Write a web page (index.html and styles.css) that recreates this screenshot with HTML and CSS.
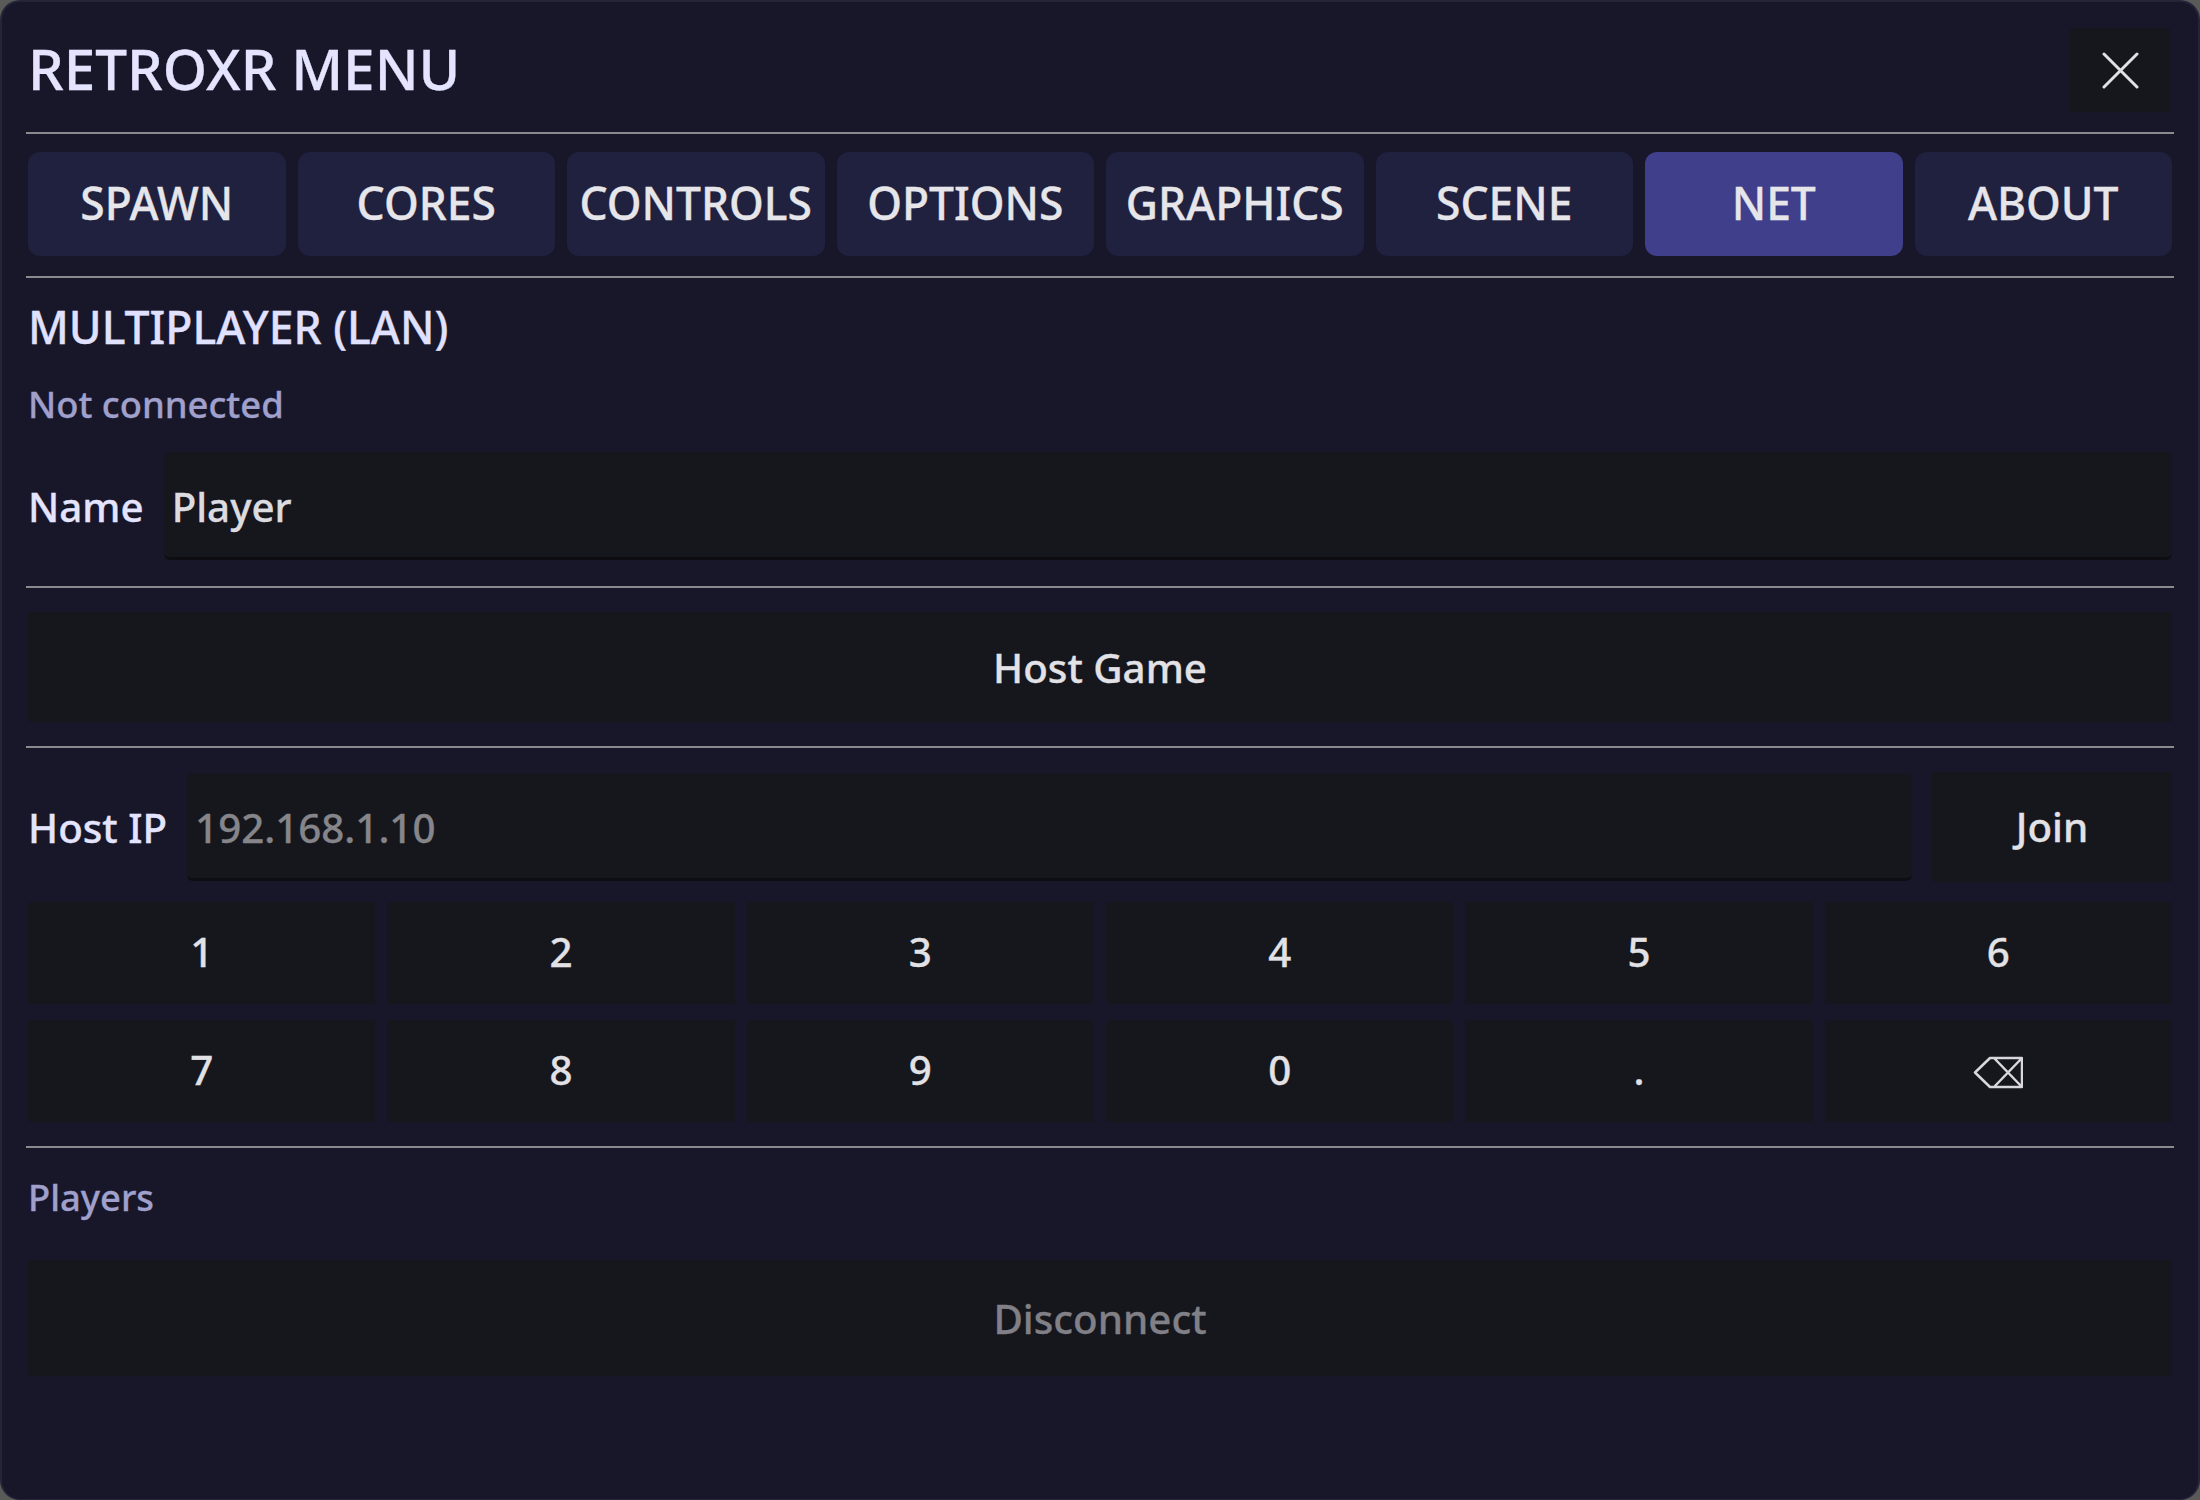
FILE: index.html
```html
<!DOCTYPE html>
<html lang="en">
<head>
    <meta charset="UTF-8">
    <title>RetroXR Menu</title>
    <link rel="stylesheet" href="styles.css">
</head>
<body>
    <div class="menu-panel">
        <div class="title-row">
            <h1>RETROXR MENU</h1>
            <button class="close-btn" aria-label="Close">
                <svg width="37" height="37" viewBox="0 0 37 37">
                    <path d="M2 2L35 35M35 2L2 35" stroke="#e2e2e6" stroke-width="3" stroke-linecap="round" fill="none"/>
                </svg>
            </button>
        </div>
        <hr class="divider">

        <div class="tabs">
            <button class="tab">SPAWN</button>
            <button class="tab">CORES</button>
            <button class="tab">CONTROLS</button>
            <button class="tab">OPTIONS</button>
            <button class="tab">GRAPHICS</button>
            <button class="tab">SCENE</button>
            <button class="tab active">NET</button>
            <button class="tab">ABOUT</button>
        </div>
        <hr class="divider">

        <h2>MULTIPLAYER (LAN)</h2>
        <p class="status">Not connected</p>

        <div class="field-row name-row">
            <label for="name">Name</label>
            <input type="text" id="name" value="Player">
        </div>
        <hr class="divider">

        <button class="action host-btn">Host Game</button>
        <hr class="divider">

        <div class="field-row ip-row">
            <label for="hostIp">Host IP</label>
            <input type="text" id="hostIp" placeholder="192.168.1.10">
            <button class="action join-btn">Join</button>
        </div>

        <div class="keypad">
            <button class="action">1</button>
            <button class="action">2</button>
            <button class="action">3</button>
            <button class="action">4</button>
            <button class="action">5</button>
            <button class="action">6</button>
            <button class="action">7</button>
            <button class="action">8</button>
            <button class="action">9</button>
            <button class="action">0</button>
            <button class="action">.</button>
            <button class="action" aria-label="Backspace">
                <svg class="backspace" width="50" height="33" viewBox="0 0 50 33">
                    <path d="M49 2H17L2 16.500L17 31H49ZM21 2L49 31M49 2L21 31" stroke="#d8d8dc" stroke-width="2.500" stroke-linejoin="round" fill="none"/>
                </svg>
            </button>
        </div>
        <hr class="divider">

        <p class="players-label">Players</p>
        <button class="action disconnect-btn" disabled>Disconnect</button>
    </div>
</body>
</html>
```

FILE: styles.css
```css
* {
    box-sizing: border-box;
    margin: 0;
    padding: 0;
    font-family: 'Noto Sans', 'Open Sans', sans-serif;
    font-weight: 500;
    -webkit-text-stroke: 0.3px;
}

html,
body {
    height: 100%;
}

body {
    background-color: #5a5a58;
    overflow: hidden;
}

.menu-panel {
    height: 1500px;
    padding: 0 26px;
    background-color: #18172a;
    border: 2px solid #25253a;
    border-bottom-width: 1px;
    border-radius: 20px;
    display: flex;
    flex-direction: column;
}

.divider {
    height: 2px;
    margin: 0 -2px;
    border: none;
    background-color: #8a8a8e;
    flex-shrink: 0;
}

.title-row {
    height: 130px;
    display: flex;
    justify-content: space-between;
    align-items: center;
}

h1 {
    font-size: 56.6px;
    color: #e4e4ff;
    line-height: 1;
    margin-top: 3px;
}

.close-btn {
    width: 100px;
    height: 84px;
    margin: 6px 2px 0 0;
    border: none;
    background-color: #16161d;
    display: flex;
    justify-content: center;
    align-items: center;
}

.tabs {
    margin: 18px 0 20px;
    display: grid;
    grid-template-columns: repeat(8, 1fr);
    gap: 12px;
}

.tab {
    height: 104px;
    padding-bottom: 2px;
    border: none;
    border-radius: 12px;
    background-color: #20203f;
    color: #e6e6ea;
    font-size: 44.4px;
}

.tab.active {
    background-color: #3f3f8c;
}

h2 {
    margin-top: 19px;
    font-size: 44.5px;
    line-height: 60px;
    color: #e0e0ff;
}

.status,
.players-label {
    font-size: 36.4px;
    line-height: 50px;
    color: #a0a0cc;
}

.status {
    margin-top: 22px;
}

.field-row {
    display: flex;
    align-items: center;
    gap: 20px;
}

.name-row {
    margin: 23px 0 26px;
}

.ip-row {
    margin: 24px 0 20px;
}

label {
    font-size: 40.3px;
    color: #e4e4ff;
}

input {
    flex: 1;
    min-width: 0;
    height: 108px;
    padding: 4px 8px 0;
    border: none;
    border-bottom: 3px solid #0e0e12;
    border-radius: 6px;
    background-color: #16161d;
    color: #dcdce0;
    font-size: 40.3px;
    outline: none;
}

input::placeholder {
    color: #85858a;
    opacity: 1;
}

.action {
    border: none;
    border-radius: 3px;
    background-color: #16161d;
    color: #e2e2e6;
    font-size: 40.3px;
    display: flex;
    justify-content: center;
    align-items: center;
}

.host-btn {
    height: 110px;
    margin: 24px 0;
}

.join-btn {
    width: 240px;
    height: 110px;
    padding-bottom: 2px;
    flex-shrink: 0;
}

.keypad {
    margin-bottom: 24px;
    display: grid;
    grid-template-columns: repeat(6, 1fr);
    grid-auto-rows: 102px;
    gap: 16px 12px;
}

.keypad .action {
    padding-bottom: 4px;
}

.backspace {
    margin-top: 6px;
}

.players-label {
    margin-top: 24px;
}

.disconnect-btn {
    height: 116px;
    margin-top: 38px;
    color: #808086;
}
```
